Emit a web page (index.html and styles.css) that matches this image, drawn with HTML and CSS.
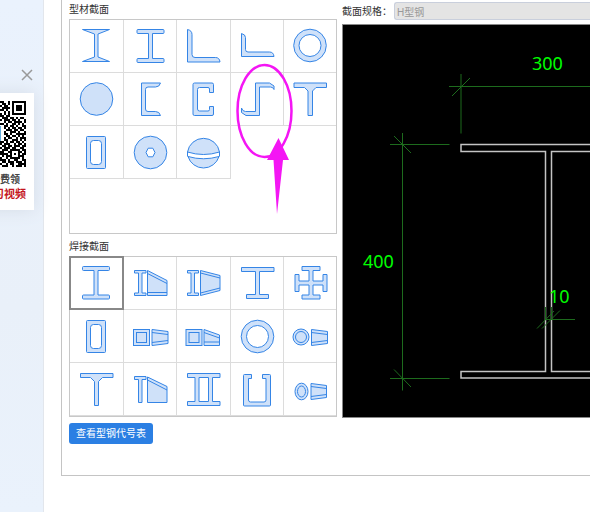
FILE: index.html
```html
<!DOCTYPE html>
<html lang="zh-CN">
<head>
<meta charset="utf-8">
<title>型材截面</title>
<link rel="stylesheet" href="styles.css">
</head>
<body>
<div class="page">
  <aside class="side">
    <button class="close" type="button" aria-label="关闭"><svg width="12" height="12" viewBox="0 0 12 12"><path d="M1 1l10 10M11 1L1 11"/></svg></button>
    <div class="promo">
      <svg class="qr" width="66" height="66" viewBox="0 0 66 66" role="img" aria-label="二维码"></svg>
      <p class="promo-line">免费领</p>
      <p class="promo-line promo-red">习视频</p>
    </div>
  </aside>
  <main class="main">
    <section class="panel">
      <div class="library">
        <h2 class="label">型材截面</h2>
        <div class="grid grid-tall">
          <button class="cell" type="button" aria-label="工字钢"><svg viewBox="0 0 52 52"><path d="M12.500 9.500H39.500L28 14V37L39.500 41.500H12.500L24.500 37V14Z"/></svg></button>
          <button class="cell" type="button" aria-label="H型钢"><svg viewBox="0 0 52 52"><path d="M14 9.500H39q1 0 1 1v2q0 1-1 1H28.500V38.500H39q1 0 1 1v2q0 1-1 1H14q-1 0-1-1v-2q0-1 1-1H24.500V13.500H14q-1 0-1-1v-2q0-1 1-1Z"/></svg></button>
          <button class="cell" type="button" aria-label="角钢"><svg viewBox="0 0 52 52"><path d="M10.500 9.500q4.500 1 4.500 5V34.500q0 3 3 3H38.500q4 0 4.500 4.500H10.500Z"/></svg></button>
          <button class="cell" type="button" aria-label="不等边角钢"><svg viewBox="0 0 52 52"><path d="M10.500 13.500q4 1 4 4V29.500q0 2.500 2.500 2.500H38.500q4 0 4.500 4.500H10.500Z"/></svg></button>
          <button class="cell" type="button" aria-label="圆管"><svg viewBox="0 0 52 52"><circle cx="26" cy="25.500" r="16.300"/><circle class="hole" cx="26" cy="25.500" r="11"/></svg></button>

          <button class="cell" type="button" aria-label="圆钢"><svg viewBox="0 0 52 52"><circle cx="26.500" cy="26" r="16.300"/></svg></button>
          <button class="cell" type="button" aria-label="槽钢"><svg viewBox="0 0 52 52"><path d="M17.500 10H36.500q-1 4-5 4H24q-2.500 0-2.500 2.500V36q0 2.500 2.500 2.500h7.500q4 0 5 4H17.500Z"/></svg></button>
          <button class="cell" type="button" aria-label="卷边槽钢"><svg viewBox="0 0 52 52"><path d="M17.500 10H35q1.500 0 1.500 1.500V19.500H32.500V16q0-1.500-1.500-1.500H22.500q-2 0-2 2V36q0 2 2 2H31q1.500 0 1.500-1.500V33.500H36.500V41q0 1.500-1.500 1.500H17.500q-1.500 0-1.500-1.500V11.500q0-1.500 1.500-1.500Z"/></svg></button>
          <button class="cell" type="button" aria-label="Z型钢"><svg viewBox="0 0 52 52"><path d="M24.500 10H38.500l4.500 3v3.500q-1-2.500-3.500-2.500H28.500V42.500H15l-4.500-3V35q1 3.500 4 3.500H24.500Z"/></svg></button>
          <button class="cell" type="button" aria-label="T型钢"><svg viewBox="0 0 52 52"><path d="M10 10H42.500V14.500H32L28.500 18V42.500H24V18L20.500 14.500H10Z"/></svg></button>

          <button class="cell" type="button" aria-label="方管"><svg viewBox="0 0 52 52"><rect x="16.500" y="10.500" width="19" height="32" rx="1"/><rect class="hole" x="20.500" y="14.500" width="11" height="24" rx="3"/></svg></button>
          <button class="cell" type="button" aria-label="中空圆钢"><svg viewBox="0 0 52 52"><circle cx="26.500" cy="26.500" r="16.300"/><path class="hole" d="M22 26.500l2.200-4.300h4.600l2.200 4.300-2.200 4.300h-4.600Z"/></svg></button>
          <button class="cell" type="button" aria-label="钢球"><svg viewBox="0 0 52 52"><path d="M10.500 26A16.200 16.200 0 0 1 42.500 26Q26.500 31 10.500 26Z"/><path d="M11 30.500Q26.500 35 42 30.500A16.200 16.200 0 0 1 11 30.500Z"/><path class="line" d="M10.500 26v4.500M42.500 26v4.500"/></svg></button>
          <svg class="mark" viewBox="0 0 58 152" width="58" height="152" aria-hidden="true"><ellipse cx="28.500" cy="47" rx="27" ry="46"/><path d="M42.500 74L53 96H47L41 150L37.500 96H31Z"/></svg>
        </div>

        <h2 class="label label-second">焊接截面</h2>
        <div class="grid">
          <button class="cell selected" type="button" aria-label="焊接H型钢"><svg viewBox="0 0 52 52"><path d="M13.500 9.500H38.500q1 0 1 1v2q0 1-1 1H28V38H38.500q1 0 1 1v2q0 1-1 1H13.500q-1 0-1-1v-2q0-1 1-1H24V13.500H13.500q-1 0-1-1v-2q0-1 1-1Z"/></svg></button>
          <button class="cell" type="button" aria-label="变截面H型钢"><svg viewBox="0 0 52 52"><path d="M10.500 13.500H22V16H18V36H22V38.500H10.500V36H14.500V16H10.500Z"/><path d="M23.500 13.500L43 23.500V38.500H23.500Z"/><path class="line" d="M23.500 16.500L43 26.500M23.500 35.500H43"/></svg></button>
          <button class="cell" type="button" aria-label="双坡变截面H型钢"><svg viewBox="0 0 52 52"><path d="M10.500 13.500H21.500V16H17.500V36H21.500V38.500H10.500V36H14V16H10.500Z"/><path d="M23.500 13.500L43 18.500V33.500L23.500 38.500Z"/><path class="line" d="M23.500 16L43 21M23.500 36L43 31"/></svg></button>
          <button class="cell" type="button" aria-label="不等翼缘H型钢"><svg viewBox="0 0 52 52"><path d="M10.500 10.500H43V14.500H28.500V37.500H37.500V41.500H15.500V37.500H24.500V14.500H10.500Z"/></svg></button>
          <button class="cell" type="button" aria-label="十字型钢"><svg viewBox="0 0 52 52"><path d="M18 9.500H36V13.500H29V24H39V17.500H43V34.500H39V28H29V38H36V42H18V38H25V28H15V34.500H11V17.500H15V24H25V13.500H18Z"/></svg></button>

          <button class="cell" type="button" aria-label="焊接箱型"><svg viewBox="0 0 52 52"><rect x="16.500" y="10.500" width="19" height="32" rx="1"/><rect class="hole" x="20.500" y="14.500" width="11" height="24" rx="3"/></svg></button>
          <button class="cell" type="button" aria-label="变截面箱型"><svg viewBox="0 0 52 52"><rect x="9.500" y="19.500" width="16" height="16"/><rect x="12.500" y="22.500" width="10" height="10"/><path d="M28 19.500L44 21.500V33.500L28 35.500Z"/><path class="line" d="M28 22.500L44 24.500M28 32.500L44 30.500"/></svg></button>
          <button class="cell" type="button" aria-label="单坡变截面箱型"><svg viewBox="0 0 52 52"><rect x="9" y="19.500" width="16" height="16"/><rect x="12" y="22.500" width="10" height="10"/><path d="M27 19.500L42.500 25V35.500H27Z"/><path class="line" d="M27 22.500L42.500 28M27 32H42.500"/></svg></button>
          <button class="cell" type="button" aria-label="焊接圆管"><svg viewBox="0 0 52 52"><circle cx="26.500" cy="26.500" r="16.300"/><circle class="hole" cx="26.500" cy="26.500" r="11"/></svg></button>
          <button class="cell" type="button" aria-label="变截面圆管"><svg viewBox="0 0 52 52"><circle cx="17" cy="27" r="8"/><circle cx="17" cy="27" r="5.500"/><path d="M27.500 19.500L43.500 21.500V33.500L27.500 35.500Z"/><path class="line" d="M27.500 22.500L43.500 24.500M27.500 32.500L43.500 30.500"/></svg></button>

          <button class="cell" type="button" aria-label="焊接T型钢"><svg viewBox="0 0 52 52"><path d="M10.500 10.500H43V14.500H32.500L28.500 18.500V42.500H24.500V18.500L20.500 14.500H10.500Z"/></svg></button>
          <button class="cell" type="button" aria-label="变截面T型钢"><svg viewBox="0 0 52 52"><path d="M10.500 13.500H22V16.500H18V39.500H14.500V16.500H10.500Z"/><path d="M23.500 14L43 23.500V39.500H23.500Z"/><path class="line" d="M23.500 17L43 27"/></svg></button>
          <button class="cell" type="button" aria-label="双腹板型钢"><svg viewBox="0 0 52 52"><path d="M10.500 10.500H43V14.500H35.500V38.500H43V42.500H10.500V38.500H18V14.500H10.500Z"/><path class="hole" d="M22 14.500H31.500V38.500H22Z"/></svg></button>
          <button class="cell" type="button" aria-label="C型槽"><svg viewBox="0 0 52 52"><path d="M13.500 11.500H20.500V15.500H17.500V37q0 2 2 2H33q2 0 2-2V15.500H31.500V11.500H38.500q1 0 1 1V42q0 1-1 1H13.500q-1 0-1-1V12.500q0-1 1-1Z"/></svg></button>
          <button class="cell" type="button" aria-label="变截面椭圆管"><svg viewBox="0 0 52 52"><ellipse cx="17.500" cy="28.500" rx="6.500" ry="8.300"/><ellipse cx="17.500" cy="28.500" rx="4" ry="5.500"/><path d="M27 20.500L42.500 22.500V34.500L27 36.500Z"/><path class="line" d="M27 23.500L42.500 25.500M27 33.500L42.500 31.500"/></svg></button>
        </div>
        <button class="primary" type="button">查看型钢代号表</button>
      </div>

      <div class="preview">
        <div class="spec">
          <label for="spec">截面规格：</label>
          <input id="spec" type="text" value="H型钢" disabled>
        </div>
        <svg class="drawing" role="img" aria-label="H型钢截面尺寸">
          <g transform="translate(-343 -25)">
            <path class="steel" d="M2000 144.500H461V151.500H545.500V371.500H461V378H2000M2000 151.500H551.500V371.500H2000"/>
            <path class="dim" d="M449 86.500H2000M461 74V133.500M452 96L470 78M402.500 133V390.500M390 144.500H449.500M394 136L411 153M390 378.500H449.500M394 369.500L411 387M545 319.500H575M545.500 307V320M551.500 307V320M537 328.500L554 311M542 328.500L560 310.500"/>
            <text x="532" y="70">300</text>
            <text x="363" y="268">400</text>
            <text x="549" y="303">10</text>
          </g>
        </svg>
      </div>
    </section>
  </main>
</div>
<script src="qr.js"></script>
</body>
</html>
```

FILE: styles.css
```css
* { box-sizing: border-box; }

body {
  margin: 0;
  font: 10px/14px "Liberation Sans", "Noto Sans CJK SC", sans-serif;
  color: #333;
  background: #fff;
  overflow: hidden;
}

.page {
  display: grid;
  grid-template-columns: 44px 1fr;
  min-height: 100vh;
}

.side {
  display: flex;
  flex-direction: column;
  align-items: flex-end;
  gap: 12px;
  padding: 69px 9px 0 0;
  background: linear-gradient(#eaf2fd, #e9f0f9 60%, #eaf2fc);
  border-right: 1px solid #e2e6ec;
}

.close {
  width: 14px;
  height: 12px;
  padding: 0 1px;
  border: 0;
  background: none;
}

.close svg {
  display: block;
  fill: none;
  stroke: #999;
  stroke-width: 1.5;
}

.promo {
  width: 82px;
  height: 117px;
  padding: 8px 8px 0;
  background: #fff;
  box-shadow: 0 0 16px #d5dce6;
}

.qr { display: block; }

.promo-line {
  margin: 6px 6px 0 0;
  text-align: right;
  font-size: 10px;
  line-height: 14px;
  font-weight: bold;
  color: #444;
}

.promo-red {
  margin: 0;
  font-size: 11px;
  color: #c4161c;
}

.main {
  position: relative;
  padding-left: 17px;
  overflow: hidden;
}

.panel {
  display: grid;
  grid-template-columns: 268px 1fr;
  gap: 5px;
  height: 476px;
  padding: 2px 0 0 7px;
  border: 1px solid #c4c4c4;
  border-width: 0 0 1px 1px;
}

.label {
  margin: 0 0 1px;
  font-size: 10px;
  line-height: 16px;
  font-weight: normal;
}

.label-second { margin-top: 5px; }

.grid {
  position: relative;
  display: grid;
  grid-template-columns: repeat(4, 1fr) 52px;
  grid-auto-rows: 53px;
  align-content: start;
  border: 1px solid #c8c8c8;
}

.grid-tall { min-height: 215px; }

.cell {
  min-width: 0;
  padding: 0;
  border: 0 solid #dcdcdc;
  border-width: 0 1px 1px 0;
  background: none;
}

.cell:nth-child(5n) { border-right-width: 0; }

.cell.selected { border: 2px solid #888; margin: -1px 0 0 -1px; }

.cell svg {
  display: block;
  width: 52px;
  height: 52px;
  fill: #cfe1f9;
  stroke: #3585e6;
  stroke-width: 1;
}

.cell.selected svg { margin: -1px; }

.cell .hole { fill: #fff; }

.cell .line { fill: none; }

.mark {
  position: absolute;
  right: 42px;
  top: 44px;
  overflow: visible;
  fill: #f416f4;
}

.mark ellipse {
  fill: none;
  stroke: #f416f4;
  stroke-width: 2.5;
}

.primary {
  display: block;
  height: 21px;
  margin-top: 6px;
  padding: 1px 7px 0;
  border: 0;
  border-radius: 3px;
  background: #2b7fe3;
  color: #fff;
  font: inherit;
}

.preview { min-width: 0; }

.spec {
  display: flex;
  align-items: center;
  gap: 2px;
  height: 18px;
  margin-bottom: 4px;
  white-space: nowrap;
}

.spec label {
  flex: 0 0 50px;
  padding-top: 2px;
}

.spec input {
  flex: 1;
  min-width: 0;
  height: 18px;
  padding: 0 2px;
  border: 1px solid #c9cfdc;
  border-right: 0;
  border-radius: 3px 0 0 3px;
  background: #e4e4e4;
  color: #999;
  font: inherit;
}

.drawing {
  display: block;
  width: 100%;
  height: 394px;
  border: 1px solid #888;
  border-right: 0;
  background: #000;
}

.steel {
  fill: none;
  stroke: #c4c4c4;
  stroke-width: 1.5;
}

.dim {
  fill: none;
  stroke: #1d6b1d;
  stroke-width: 1;
}

.drawing text {
  fill: #0f0;
  font: 18px "Noto Sans", sans-serif;
}
```

FILE: qr.js
```js
// Right-hand columns of the code; each character is one 2px module.
const rows = [
  "1100101111111", "0110101000001", "1011001011101", "0111101011101", "1101001011101",
  "0010101000001", "1010101111111", "1101100000000", "0111011010110", "1011101101001",
  "0010110111101", "1101001101010", "0011011010011", "0010101101101", "0001110110110",
  "0010011101001", "0011010011111", "0001101101010", "0010110010111", "0011001110101",
  "1101011011010", "1011100101101", "0110110111011", "1011101100110", "0111011111011",
  "1100110001101", "1111010101011", "0101110001110", "1001011111010", "1110100110011",
  "0110111011101", "1001011001111", "0111001011101"
];
const d = rows.map((row, y) =>
  [...row].map((bit, x) => bit === "1" ? `M${40 + x * 2} ${y * 2}h2v2h-2z` : "").join("")
).join("");
document.querySelector(".qr").innerHTML =
  `<path d="${d}"/><rect x="24" y="25" width="17" height="15" fill="#65addb"/>`;
```
